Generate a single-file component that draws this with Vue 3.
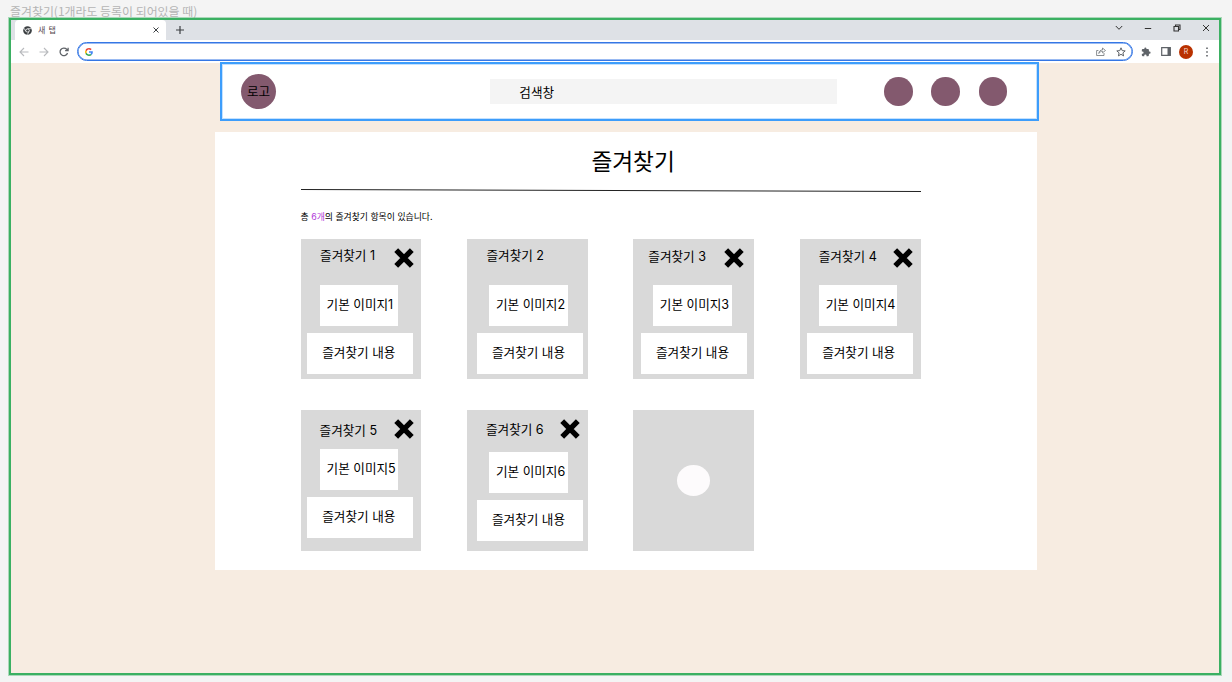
<script setup>
const cards = [
  { id: 1, closable: true },
  { id: 2, closable: false },
  { id: 3, closable: true },
  { id: 4, closable: true },
  { id: 5, closable: true },
  { id: 6, closable: true },
]
</script>

<template>
  <div class="page">
    <div class="caption">즐겨찾기(1개라도 등록이 되어있을 때)</div>
    <div class="window">
      <div class="tabs">
        <div class="tab">
          <svg class="chrome" viewBox="0 0 24 24">
            <circle cx="12" cy="12" r="11.5" fill="#3c4043" />
            <path d="M12 7H22M7.7 14.5L2.7 5.8M16.3 14.5L11.3 23.2" stroke="#fff" stroke-width="1.8" />
            <circle cx="12" cy="12" r="5.6" fill="#fff" />
            <circle cx="12" cy="12" r="3.5" fill="#3c4043" />
          </svg>
          <span class="tab-name">새 탭</span>
          <svg class="tab-x" viewBox="0 0 6 6"><path d="M.5 .5L5.5 5.5M5.5 .5L.5 5.5" stroke="#3c4043" stroke-width="1" /></svg>
        </div>
        <svg class="plus" viewBox="0 0 8 8"><path d="M4 0V8M0 4H8" stroke="#3c4043" stroke-width="1.2" /></svg>
        <div class="controls">
          <svg width="8" height="8" viewBox="0 0 8 8"><path d="M.8 2L4 5.300L7.200 2" /></svg>
          <svg width="8" height="8" viewBox="0 0 8 8"><path d="M.8 4.500H7.200" /></svg>
          <svg width="8" height="8" viewBox="0 0 8 8"><path d="M1 2.500H5.500V7H1ZM2.500 2.500V1H7V5.500H5.500" stroke-width="1.100" /></svg>
          <svg width="8" height="8" viewBox="0 0 8 8"><path d="M1 1L7 7M7 1L1 7" /></svg>
        </div>
      </div>
      <div class="toolbar">
        <svg class="nav faded" viewBox="0 0 10 10"><path d="M9.500 5H1M5 1L1 5L5 9" /></svg>
        <svg class="nav faded" viewBox="0 0 10 10"><path d="M.5 5H9M5 1L9 5L5 9" /></svg>
        <svg class="nav" viewBox="0 0 10 10"><path d="M8.500 6A3.800 3.800 0 1 1 7.700 2.300L9 3.600M9.100 .7V3.700H6.100" /></svg>
        <div class="address">
          <svg class="google" viewBox="0 0 48 48">
            <path fill="#ea4335" d="M24 9.500c3.500 0 6.700 1.200 9.200 3.600l6.900-6.900C35.900 2.400 30.500 0 24 0 14.600 0 6.500 5.400 2.600 13.200l8 6.200C12.400 13.700 17.700 9.500 24 9.500z" />
            <path fill="#4285f4" d="M47 24.500c0-1.600-.2-3.100-.4-4.500H24v9h12.900c-.6 3-2.200 5.500-4.700 7.200l7.700 6C44.400 38 47 31.800 47 24.500z" />
            <path fill="#fbbc05" d="M10.500 28.600c-.5-1.500-.8-3-.8-4.600s.3-3.100.8-4.600l-8-6.200C.9 16.500 0 20.100 0 24s.9 7.500 2.600 10.800z" />
            <path fill="#34a853" d="M24 48c6.500 0 11.900-2.100 15.900-5.800l-7.700-6c-2.200 1.500-4.900 2.300-8.200 2.300-6.300 0-11.600-4.200-13.500-9.900l-7.900 6.200C6.500 42.600 14.600 48 24 48z" />
          </svg>
          <svg class="share" viewBox="0 0 10 9"><path d="M2.400 3.500H.6V8.500H8V6M2.800 6.500C3 4 4.500 3 6.500 2.900V1L9.500 3.500L6.500 5.800V4.300C5 4.300 3.700 4.900 2.800 6.500Z" /></svg>
          <svg class="star" viewBox="0 0 10 10"><path d="M5 .8L6.200 3.600L9.200 3.900L6.900 5.900L7.600 8.900L5 7.300L2.400 8.900L3.100 5.900L.8 3.900L3.800 3.600Z" /></svg>
        </div>
        <svg class="puzzle" viewBox="0 0 24 24"><path fill="#5f6368" d="M20.500 11H19V7c0-1.100-.9-2-2-2h-4V3.500a2.500 2.500 0 0 0-5 0V5H4c-1.100 0-2 .9-2 2v3.800h1.500a2.700 2.700 0 0 1 0 5.400H2V20c0 1.100.9 2 2 2h3.800v-1.500a2.700 2.700 0 0 1 5.400 0V22H17c1.100 0 2-.9 2-2v-4h1.500a2.500 2.500 0 0 0 0-5z" /></svg>
        <svg class="side" viewBox="0 0 10 9"><path d="M.7 .7H9.300V8.300H.7Z" fill="none" stroke="#5f6368" stroke-width="1.200" /><path d="M6.500 .7H9.500V8.300H6.500Z" fill="#5f6368" /></svg>
        <div class="avatar">R</div>
        <svg class="dots" viewBox="0 0 2 10"><path fill="#5f6368" d="M.2 .5H1.800V2.100H.2ZM.2 4.200H1.800V5.800H.2ZM.2 7.900H1.800V9.500H.2Z" /></svg>
      </div>
      <header class="header">
        <div class="logo">로고</div>
        <div class="search">검색창</div>
        <div class="circles"><i></i><i></i><i></i></div>
      </header>
      <main class="panel">
        <h1>즐겨찾기</h1>
        <svg class="rule" viewBox="0 0 620 4"><path d="M0 1.500L620 3.500" stroke="#222" stroke-width="1" /></svg>
        <p class="count">총 <b>6개</b>의 즐겨찾기 항목이 있습니다.</p>
        <div class="grid">
          <section v-for="c in cards" :key="c.id" class="card" :class="'card-' + c.id">
            <div class="top">
              <span class="name">즐겨찾기 {{ c.id }}</span>
              <svg v-if="c.closable" class="close" viewBox="0 0 20 20"><path d="M2.200 2.200L17.800 17.800M17.800 2.200L2.200 17.800" stroke="#000" stroke-width="5.400" /></svg>
            </div>
            <div class="image"><span>기본 이미지{{ c.id }}</span></div>
            <div class="content"><span>즐겨찾기 내용</span></div>
          </section>
          <section class="card empty"><i></i></section>
        </div>
      </main>
    </div>
  </div>
</template>

<style>
body { background: #f4f4f4; }
</style>

<style scoped>
* { box-sizing: border-box; }
.page {
  width: 1232px; height: 682px; overflow: hidden; background: #f4f4f4; color: #000;
  font-family: Inter, "Noto Sans CJK KR", sans-serif; font-size: 12.6px; white-space: nowrap;
}
svg { display: block; flex: none; fill: none; }
.caption { height: 18px; padding-left: 10px; font: 11.930px/22px "Noto Sans CJK KR", sans-serif; color: #b5b5b5; }
.window { width: 1212px; height: 657px; margin-left: 9px; border: 2px solid #3bb062; outline: 1px solid #3bb06266; background: #f7ece1; }
.tabs { display: flex; align-items: center; height: 20px; padding-left: 4px; background: #dee1e6; }
.tab { display: flex; align-items: center; width: 151px; height: 20px; padding: 0 7px 0 8px; background: #fff; border-radius: 4px 4px 0 0; }
.chrome { width: 9px; height: 9px; }
.tab-name { margin-left: 6px; font-size: 8px; line-height: 18px; letter-spacing: .4px; color: #55474f; }
.tab-x { width: 6px; height: 6px; margin-left: auto; }
.plus { width: 8px; height: 8px; margin-left: 10px; }
.controls { display: flex; gap: 21px; margin: -4px 9px 0 auto; stroke: #333; stroke-width: 1; }
.toolbar { display: flex; align-items: center; height: 23px; padding-left: 8px; background: #fff; }
.nav { width: 10px; height: 10px; margin-right: 10px; stroke: #5f6368; stroke-width: 1.3; }
.faded { stroke: #b8babd; stroke-width: 1.1; }
.address { display: flex; align-items: center; width: 1056px; height: 19px; margin-left: -2px; padding: 0 6px; border: 1px solid #3577e5; box-shadow: inset 0 0 0 .6px #3577e5; border-radius: 10px; }
.google { width: 8px; height: 8px; margin-left: 1px; }
.share { width: 10px; height: 9px; margin-left: auto; stroke: #6f7377; stroke-width: .8; }
.star { width: 10px; height: 10px; margin-left: 10px; stroke: #5f6368; stroke-width: 1; }
.puzzle { width: 10px; height: 10px; margin-left: 8px; }
.side { width: 10px; height: 9px; margin-left: 10px; }
.avatar { width: 14px; height: 14px; margin-left: 8px; border-radius: 50%; background: #b93100; color: #f6dcd3; font-size: 7px; line-height: 14px; text-align: center; }
.dots { width: 2px; height: 10px; margin-left: 13px; }
.header { display: flex; align-items: center; width: 818.600px; height: 59px; margin: -1px 0 0 209px; padding: 0 29.500px 0 19px; border: 2px solid #3d9dfb; box-shadow: inset 0 0 0 1px #c4e1fe; background: #fff; position: relative; }
.logo { width: 35px; height: 35px; border-radius: 50%; background: #83596e; line-height: 35px; text-align: center; }
.search { width: 347px; height: 25px; margin-left: 214px; padding-left: 29.300px; background: #f4f4f4; line-height: 28px; }
.circles { display: flex; gap: 18.800px; margin-left: auto; }
.circles i { width: 28.500px; height: 28.500px; border-radius: 50%; background: #83596e; }
.panel { width: 822.600px; height: 438px; margin: 11px 0 0 203.700px; background: #fff; }
h1 { margin: 0; padding: 10px 0 0 376.700px; height: 56px; font-size: 22.700px; font-weight: 400; line-height: 40px; }
.rule { width: 620px; height: 4px; margin-left: 85.900px; }
.count { height: 46.700px; margin: 0 0 0 85.900px; font-size: 8.850px; line-height: 49px; }
.count b { font-weight: 400; color: #b13bd8; }
.grid { display: grid; grid-template-columns: repeat(4, 120.800px); gap: 30.500px 45.600px; margin-left: 85.900px; }
.card {
  --title-x: 19.500px; --title-y: 17px; --close-x: 93.100px; --image-x: 19.500px; --image-y: 46.300px; --content-x: 6.700px;
  height: 140.800px; background: #d9d9d9;
}
.top { display: flex; height: var(--image-y); }
.name { width: calc(var(--close-x) - var(--title-x)); margin: calc(var(--title-y) - 10px) 0 0 var(--title-x); line-height: 20px; }
.close { width: 20px; height: 20px; margin-top: 9.500px; }
.image, .content { display: flex; align-items: center; height: 41px; background: #fff; line-height: 20px; }
.image { width: 78.200px; margin-left: var(--image-x); padding-left: 6.500px; }
.content { width: 106.200px; margin: 7px 0 0 var(--content-x); padding-left: 15px; }
.image span, .content span { margin-top: -.4px; }
.card-2 { --image-x: 22.500px; --content-x: 10px; }
.card-3 { --title-x: 15px; --title-y: 18px; --close-x: 91.100px; --image-x: 20px; --content-x: 7.600px; }
.card-4 { --title-x: 19px; --title-y: 18px; --close-x: 93.100px; --content-x: 7.400px; }
.card-5 { --title-x: 19px; --title-y: 21.300px; --image-y: 39px; }
.card-6 { --title-x: 19px; --title-y: 20.500px; --close-x: 93.500px; --image-x: 22.500px; --image-y: 42px; --content-x: 10px; }
.empty { display: flex; align-items: center; justify-content: center; }
.empty i { width: 33px; height: 30.500px; border-radius: 50%; background: #fdfbfc; }
</style>
